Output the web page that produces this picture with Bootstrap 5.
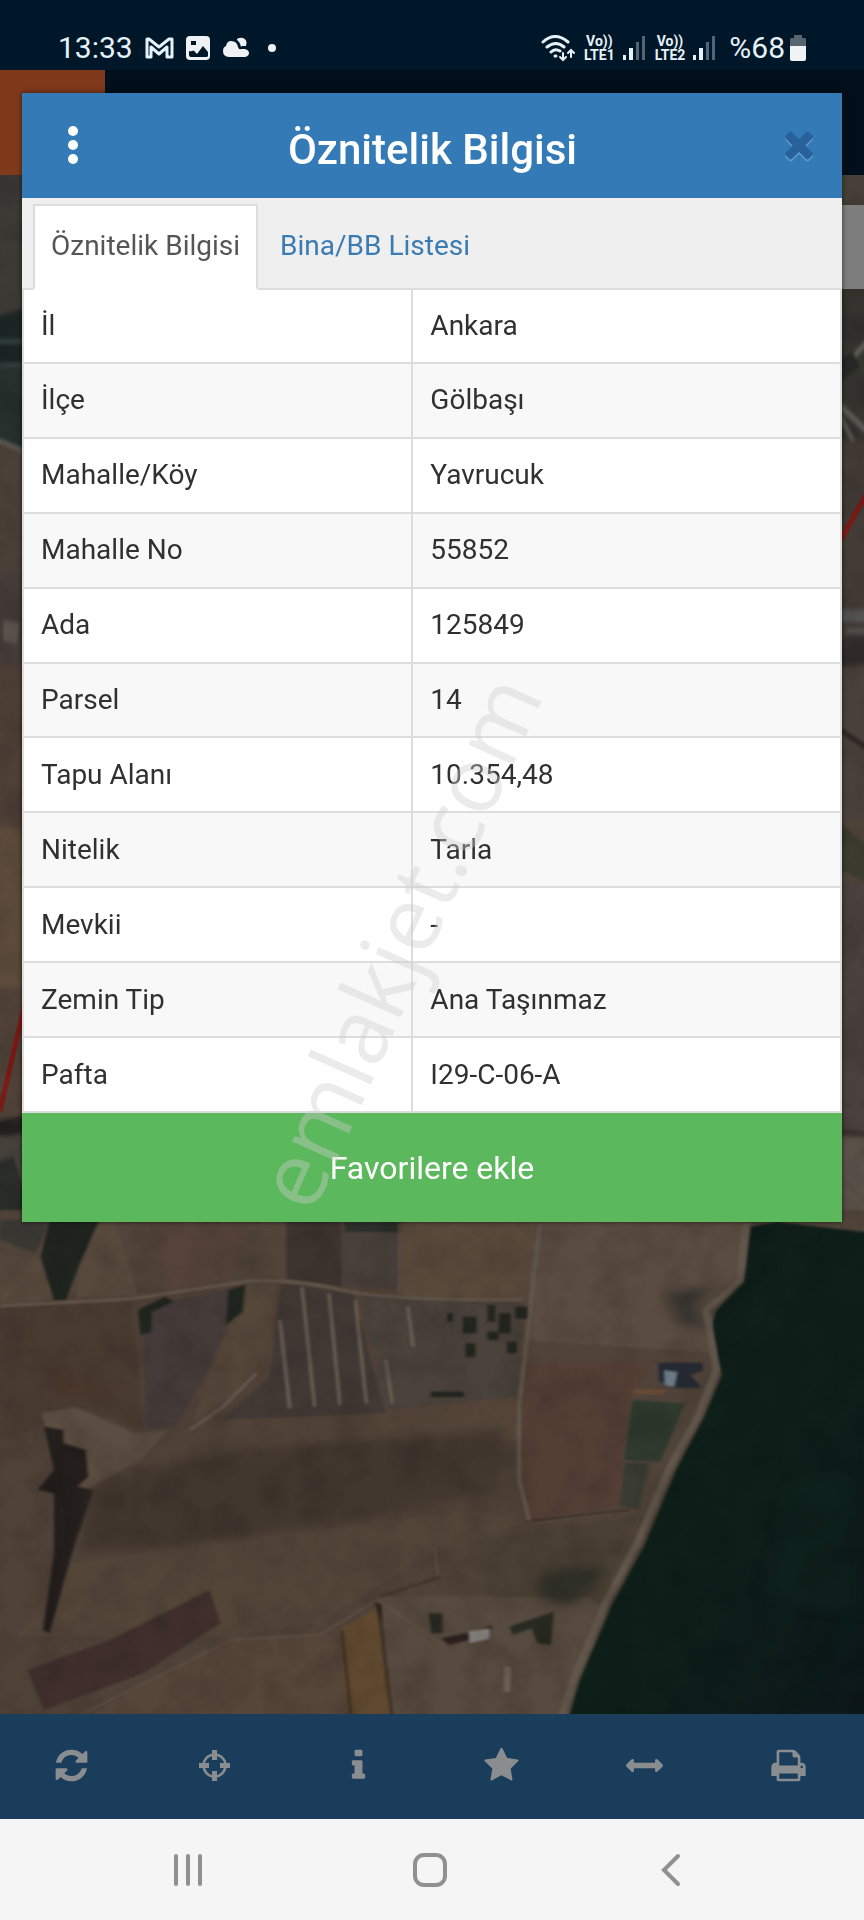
<!DOCTYPE html>
<html lang="tr">
<head>
<meta charset="utf-8">
<meta name="viewport" content="width=device-width, initial-scale=1">
<title>Öznitelik Bilgisi</title>
<link href="https://cdn.jsdelivr.net/npm/bootstrap@5.3.0/dist/css/bootstrap.min.css" rel="stylesheet">
<style>
  body { font-family: Roboto, "Liberation Sans", sans-serif; font-size: 28px; color: #303030; background: #001629; }
  .status-strip { height: 70px; padding: 26px 57px 0 58px; color: #e6f2fa; font-size: 30px; line-height: 40px; }
  .volte { font-size: 14px; line-height: 14px; font-weight: 700; }
  .status-strip svg, .tool svg, .sysnav svg { display: block; }
  .app { display: grid; grid-template-columns: 100%; }
  .app > * { grid-area: 1 / 1; }
  .app-bar { height: 105px; background: #000f1b; }
  .brand-block { width: 105px; background: #80391b; }
  .map-area { min-height: 0; background: #4f4339; }
  .search-strip { top: 30px; right: 0; width: 60px; height: 84px; background: #7d7d7d; }
  .toolbar { height: 105px; background: #1a3d5c; padding: 0 4px 2px 0; }
  .tool { flex: 1 1 0; color: #8a8d90; background: none; border: 0; padding: 0; }
  .info-panel { z-index: 1; align-self: start; margin: 23px 22px 0; box-shadow: 0 0 5px rgba(0,0,0,.6); background: #efefef; }
  .panel-head { height: 105px; background: #337ab7; color: #fff; padding: 0 22px 0 31px; }
  .panel-head h1 { flex: 1; text-align: center; padding: 8px 8px 0 0; font-size: 42px; font-weight: 500; line-height: 48px; }
  .head-btn { width: 42px; background: none; border: 0; padding: 0; color: #fff; line-height: 0; }
  .close-mark { color: #29629a; padding-bottom: 4px; filter: drop-shadow(0 2px 0 #5f9bce); }
  .panel-tabs { height: 92px; padding: 6px 10px 0 11px; border-bottom: 2px solid #ddd; }
  .panel-tabs .nav-link { height: 86px; padding: 0 16px 2px; border-radius: 0; border: 2px solid transparent; color: #3a7bb2; line-height: 36px; margin-bottom: -2px; }
  .panel-tabs .nav-link.active { color: #555; border-color: #ddd #ddd #fff; background: #fff; }
  .attr-table { height: 823px; border: solid #ddd; border-width: 0 2px; --bs-table-color: #303030; --bs-table-bg: #fff; }
  .attr-table .label-col { width: 47.6%; }
  .attr-table th, .attr-table td { padding: 0 17px; font-weight: 400; vertical-align: middle; border: 0 solid #ddd; border-bottom-width: 2px; line-height: 36px; }
  .attr-table th { border-right-width: 2px; }
  .attr-table tr:nth-child(even) > * { background: #f8f8f8; }
  .fav-btn { height: 109px; background: #5cb85c; color: #fff; font-size: 32px; border: 0; border-radius: 0; }
  .fav-btn:hover { background: #5cb85c; color: #fff; }
  .sysnav { height: 101px; background: #f5f5f5; padding: 0 72px 0 67px; }
  .sysnav button { background: none; border: 0; padding: 0; color: #909090; }
  .watermark { left: 46%; top: 49%; transform: translate(-50%, -50%) rotate(-66deg); font-family: "Open Sans", sans-serif; font-size: 91px; font-weight: 500; line-height: 1; color: rgba(205,205,205,.4); z-index: 2; pointer-events: none; white-space: nowrap; }
</style>
</head>
<body>
<div class="d-flex flex-column min-vh-100 position-relative overflow-hidden">

  <header class="status-strip d-flex align-items-center justify-content-between">
    <div class="d-flex align-items-center">
      <span>13:33</span>
      <svg class="ms-2" width="36" height="28" viewBox="0 0 36 28" fill="none" stroke="currentColor" stroke-width="3" stroke-linejoin="round"><path d="M6 5h2l10 8 10-8h3v18h-5V13l-8 7-8-7v10H6z"/></svg>
      <svg class="ms-2" width="26" height="26" viewBox="0 0 26 26"><rect x="1" y="1" width="24" height="24" rx="4" fill="#eef2f4"/><path fill="#001629" d="M4 16c3 1 5-2 6 1l2 2 6-8 5 6v4q0 1-2 1H6q-2 0-2-2zM6 6h5v4H6z"/></svg>
      <svg class="ms-2 me-1" width="34" height="26" viewBox="0 0 34 26" fill="#eef2f4"><path d="M12 6q6 0 7 6 1 3 3 2h4q4 1 4 4t-4 4H11q-7 0-7-6 0-4 3-5 1-5 5-5z"/><path d="M18 4q3-2 6-1 5 2 3 8h-4l-1 1q-1-5-4-7z"/></svg>
      <svg class="ms-2" width="14" height="14" viewBox="0 0 14 14"><circle cx="7" cy="7" r="4" fill="#eef2f4"/></svg>
    </div>
    <div class="d-flex align-items-center">
      <svg width="36" height="30" viewBox="0 0 36 30" fill="none" stroke="currentColor" stroke-width="3" stroke-linecap="round"><path d="M3 9q12-11 25 0M7 14q9-7 17 0M11 19q4-4 9-1"/><path d="M15 23h1" /><path stroke-width="2" d="M23 20v7m-3-3 3 3 3-3M31 24v-7m-3 3 3-3 3 3"/></svg>
      <div class="volte text-center ms-2"><div>Vo))</div><div>LTE1</div></div>
      <svg class="ms-2" width="24" height="26" viewBox="0 0 24 26"><path fill="#e6f2fa" d="M0 20h3v5H0zM6 13h4v12H6z"/><path fill="#536475" d="M13 7h3v18h-3zM19 1h3v24h-3z"/></svg>
      <div class="volte text-center ms-2"><div>Vo))</div><div>LTE2</div></div>
      <svg class="ms-2" width="24" height="26" viewBox="0 0 24 26"><path fill="#e6f2fa" d="M0 20h3v5H0zM6 13h4v12H6z"/><path fill="#536475" d="M13 7h3v18h-3zM19 1h3v24h-3z"/></svg>
      <span class="ms-2 ps-1">%68</span>
      <svg class="ms-1" width="18" height="28" viewBox="0 0 18 28"><path fill="#56656f" d="M5 1h8v3h3q1 0 1 2v8H1V6q0-2 1-2h3z"/><path fill="#f0f3f4" d="M1 12h16v13q0 2-2 2H3q-2 0-2-2z"/></svg>
    </div>
  </header>

  <div class="app flex-grow-1">
    <div class="d-flex flex-column">
      <div class="app-bar d-flex"><div class="brand-block"></div></div>
      <div class="map-area flex-grow-1 position-relative overflow-hidden">
        <svg class="position-absolute top-0 start-0 w-100 h-100" viewBox="0 0 864 1539" preserveAspectRatio="xMidYMax slice" aria-hidden="true">
          <defs>
            <linearGradient id="water" x1="0" x2="1" y1="0" y2="1"><stop offset="0" stop-color="#101d1a"/><stop offset=".55" stop-color="#0e1f19"/><stop offset="1" stop-color="#0d171b"/></linearGradient>
            <linearGradient id="field" x1="0" x2="1"><stop offset="0" stop-color="#4b3e36"/><stop offset="1" stop-color="#564639"/></linearGradient>
            <filter id="soft" color-interpolation-filters="sRGB"><feGaussianBlur stdDeviation="3"/></filter>
            <filter id="haze" x="-30%" y="-30%" width="160%" height="160%" color-interpolation-filters="sRGB"><feGaussianBlur stdDeviation="14"/></filter>
            <filter id="grain" x="0" y="0" width="100%" height="100%"><feTurbulence type="fractalNoise" baseFrequency=".03 .03" numOctaves="4" seed="4"/><feColorMatrix values="0 0 0 0 0  0 0 0 0 0  0 0 0 0 0  1.3 0 0 0 -.5"/></filter>
          </defs>
          <!-- strips beside the panel -->
          <g transform="translate(0 -15) scale(.333 .702)" filter="url(#soft)">
            <path fill="#3d3935" d="M-20 0h120v225H-20z"/><path fill="#1c2524" d="M-20 225l100-15v100h-100z"/><path fill="#3f4c4c" d="M-20 256h100v5h-100zM-20 290h100v4h-100z"/><path fill="#26302c" d="M-20 295h100v120l-100-20z"/>
            <path fill="#4c4139" d="M-20 400l100 20v180h-100z"/><path stroke="#6a625a" stroke-width="6" d="M-10 398l90 18"/><path fill="#453b38" d="M-20 590h100v130h-100z"/><path fill="#5c5550" d="M10 655l50 5-10 30-40-5z"/>
            <path fill="#4e4037" d="M-20 720h100v230h-100z"/><path fill="#5c4b3a" d="M-20 950h100v230h-100z"/><path fill="#504239" d="M-20 1180h100v180h-100z"/>
            <path fill="#242322" d="M-20 1370l100-10v25l-100 10z"/><path fill="#47423c" d="M-20 1390h100v200h-100z"/><path fill="#2a2d29" d="M-20 1430l60-10 40 60v100H-20z"/>
          </g>
          <g transform="translate(780 -15) scale(.333 .702)" filter="url(#soft)">
            <path fill="#464038" d="M170 0h120v70H170z"/><path fill="#35342f" d="M170 180h120v220H170z"/><path stroke="#5e5c56" stroke-width="10" fill="none" d="M180 300l80-40M180 350l90 40M180 365l90 80"/><path fill="#252724" d="M180 285l40-10 20 20-60 20z"/>
            <path fill="#433b36" d="M170 400h120v300H170z"/><path fill="#5a5856" d="M180 640h90v18h-90zM200 668h60v5h-60z"/><path fill="#332e2c" d="M170 680h120v40H170z"/><path fill="#4a403b" d="M170 720h120v220H170z"/><path stroke="#1f1b1a" stroke-width="6" d="M180 812l90 28"/>
            <path fill="#3b3b2f" d="M170 940l100 40v50l-100-20z"/><path fill="#4a403d" d="M170 1020l120 20v350H170z"/><path stroke="#292422" stroke-width="4" d="M180 1384l90 5"/><path fill="#5a5149" d="M170 1392h120v130l-60-5-60-10z"/>
          </g>
          <path d="M0 936l26-112M838 370l30-54" stroke="#7c1b17" stroke-width="5"/>
          <!-- farmland and reservoir below the panel -->
          <g transform="translate(0 1025) scale(.551 .3333)">
            <g filter="url(#soft)">
              <path fill="#51443a" d="M-20 30h1620v920H-20z"/><path fill="url(#field)" d="M-20 300l470-60 510 60v670L-20 1120z"/>
              <path fill="#4f4238" d="M-20 720h1140v860H-20z"/>
              <path fill="#59493b" d="M725 40h240v258l-235-10z"/><path fill="#5a4c40" d="M965 40h400v160l-80 110 20 150-350-40z"/>
              <path fill="#55433a" d="M280 60h170l-30 180-120 30z"/><path fill="#3d332f" d="M520 60h100v200l-100-22z"/><path fill="#4a403b" d="M620 90h105v180l-105-18z"/><path fill="#2c302a" d="M625 66h102v30H625z"/>
              <path fill="#57493c" d="M0 160l70 20 30 120-100 15zM150 70h60l40 215-110 10z"/>
              <path fill="#1f241f" d="M90 60h90l-40 150-20 90-22 0-24-130z"/><path fill="#3b3934" d="M0 60h90l-25 100-65-40z"/>
              <path fill="#4a3b32" d="M0 320l240-20 20 390-100-60-160 90z"/>
              <path fill="#453b39" d="M260 320l180-60-60 240-60 180-55 5z"/>
              <path fill="#55473a" d="M450 250h50l-10 190-70 150-70 80 30-150z"/>
              <path fill="#423935" d="M510 250l130 30 60 360-300 20 90-130z"/><path fill="#4a423b" d="M650 280l300 30-10 280-240 40z"/>
              <path fill="#50433a" d="M940 425l350 50-40 120-110 10-20 320-150 50-25-100z"/><path fill="#543f35" d="M952 490l235-5-45 120-20 310-160 50-15-220z"/>
              <path fill="#544539" d="M130 1090l280-70 460-90 80 40-180 100-190 200-170 40-380 0z"/>
              <path fill="#5b4d41" d="M75 640l60-20 110 80 60-10-50 90-100 90-50-60z"/>
              <path fill="#402f2d" d="M50 1410l150-90 180-150 20 100-140 150-180 110z"/><path fill="#564539" d="M410 1310l190-10 110 260-560 0z"/><path fill="#604930" d="M615 1290l72-70 24 340h-78z"/>
              <path fill="#4b4035" d="M870 1020l280-70-50 220-200 130z"/><path fill="#574a3f" d="M690 1190l380 0 40 60-60 310H710z"/>
              <path fill="#241f1d" d="M80 680l35 10 0 40 40 20 5 80-20 30 30 10-30 140-20 110-30 180-12-10 20-230 0-180-30-10 30-60z"/>
              <path fill="url(#water)" d="M1362 80l50-14 156 30h30v1500H1025L1052 1440 1110 1216 1168 1040 1228 806 1278 650 1310 526 1290 386 1300 330 1350 246z"/>
            </g>
            <g filter="url(#haze)">
              <path fill="#3b3029" d="M160 860q120-80 350-120l410-60-20 200-480 140-270 40z" opacity=".6"/>
              <path fill="#32302c" d="M1215 280l80-25-35 60 20 80-50-30z"/><path fill="#2e2f26" d="M980 1130l60-30 60 10-60 110-60-30z"/><path fill="#0f2a1e" d="M1440 850l110-50v450l-160-60z" opacity=".25"/>
              <path fill="#4a3325" d="M100 500l120 80-130 20z" opacity=".5"/>
            </g>
            <g filter="url(#soft)" fill="none" stroke-linejoin="round">
              <path stroke="#62574c" stroke-width="13" d="M1354 70L1342 240 1282 330 1300 510 1266 650 1216 800 1156 1030 1098 1210 1040 1440 1018 1560"/>
              <path stroke="#64584c" stroke-width="9" d="M0 318l240-22 210-52q90-10 180 30 110 30 320 24"/>
              <path stroke="#655a4e" stroke-width="7" d="M980 70l-16 230-22 320 0 220 20 130M345 690l60-70 60-100"/>
              <path stroke="#6a6156" stroke-width="6" d="M508 360l18 265M548 260l23 360M597 280l20 335M645 300l20 310M740 320l10 120M700 480l12 130"/>
              <path stroke="#605247" stroke-width="4" d="M685 1190l110-60-6-90M685 1200l120 135M140 1550l280-230 160-15 110-110M970 970l180-40M725 70v210"/>
              <path stroke="#33291f" stroke-width="4" d="M688 1190l110-60M620 1290l18 270M688 1230l24 330M955 965l190-35"/>
              <path stroke="#756557" stroke-width="12" d="M921 1400v76"/>
            </g>
            <g filter="url(#soft)">
              <path fill="#303a2e" d="M1148 600l95 10-20 80-25 95-65-5z"/><path fill="#3a3c32" d="M1134 790l45-2-20 140-35-10z"/>
              <path fill="#20251f" d="M250 330l50-40 15 15-40 30v60l-20 10zM415 270l30-15-5 80-30 40z"/>
              <path fill="#23251f" d="M840 350h25v50h-25zM845 430h18v40h-18zM885 315h14v50h-14zM905 340h22v60h-22zM885 395h20v25h-20zM920 425h18v35h-18zM935 320h22v36h-22zM812 340h9v25h-9zM782 575h60v16h-60z"/>
              <path fill="#252a34" d="M1195 488h80v24l-22 12 20 40-50 0-26-20z"/><path fill="#6e7c89" d="M1205 510l25 6-6 45-18-6z"/><path fill="#694b36" d="M1150 568h58v15h-58z"/>
              <path fill="#2c201e" d="M800 1315l60-20 35-20-10 30-70 30zM680 1205l12 60 0-50z"/><path fill="#898581" d="M850 1295l38-10v32l-36 12z"/><path fill="#292b22" d="M925 1280l80-45-5 100-25-5-10-45-35 20zM778 1240h25v60h-20z"/>
            </g>
          </g>
          <rect width="864" height="1539" filter="url(#grain)" opacity=".2"/>
        </svg>
        <div class="search-strip position-absolute"></div>
      </div>
      <nav class="toolbar d-flex align-items-center" aria-label="Harita araçları">
        <button class="tool d-flex justify-content-center" aria-label="Yenile"><svg width="37" height="37" viewBox="0 0 1792 1792" fill="currentColor"><path d="M1639 1056q0 5-1 7-64 268-268 434.500t-478 166.500q-146 0-282.500-55t-243.500-157l-129 129q-19 19-45 19t-45-19-19-45v-448q0-26 19-45t45-19h448q26 0 45 19t19 45-19 45l-137 137q71 66 161 102t187 36q134 0 250-65t186-179q11-17 53-117 8-23 30-23h192q13 0 22.500 9.500t9.500 22.500zm25-800v448q0 26-19 45t-45 19h-448q-26 0-45-19t-19-45 19-45l138-138q-148-137-349-137-134 0-250 65t-186 179q-11 17-53 117-8 23-30 23h-199q-13 0-22.500-9.500t-9.500-22.500v-7q65-268 270-434.500t480-166.500q146 0 284 55.500t245 156.500l130-129q19-19 45-19t45 19 19 45z"/></svg></button>
        <button class="tool d-flex justify-content-center" aria-label="Konumum"><svg width="37" height="37" viewBox="0 0 37 37" fill="currentColor"><circle cx="18.500" cy="18.500" r="11" fill="none" stroke="currentColor" stroke-width="2.500"/><path d="M16 3h5v10h-5zM16 24h5v10h-5zM3 16h10v5H3zM24 16h10v5H24z"/></svg></button>
        <button class="tool d-flex justify-content-center" aria-label="Bilgi"><svg width="37" height="37" viewBox="0 0 1792 1792" fill="currentColor"><path d="M1216 1344v128q0 26-19 45t-45 19h-512q-26 0-45-19t-19-45v-128q0-26 19-45t45-19h64v-384h-64q-26 0-45-19t-19-45v-128q0-26 19-45t45-19h384q26 0 45 19t19 45v576h64q26 0 45 19t19 45zm-128-1152v192q0 26-19 45t-45 19h-256q-26 0-45-19t-19-45v-192q0-26 19-45t45-19h256q26 0 45 19t19 45z"/></svg></button>
        <button class="tool d-flex justify-content-center" aria-label="Favoriler"><svg width="37" height="37" viewBox="0 0 1792 1792" fill="currentColor"><path d="M1728 647q0 22-26 48l-363 354 86 500q1 7 1 20 0 21-10.500 35.500t-30.500 14.500q-19 0-40-12l-449-236-449 236q-22 12-40 12-21 0-31.500-14.500t-10.500-35.500q0-6 2-20l86-500-364-354q-25-27-25-48 0-37 56-46l502-73 225-455q19-41 49-41t49 41l225 455 502 73q56 9 56 46z"/></svg></button>
        <button class="tool d-flex justify-content-center" aria-label="Ölçüm"><svg width="37" height="37" viewBox="0 0 1792 1792" fill="currentColor"><path d="M1792 896q0 26-19 45l-256 256q-19 19-45 19t-45-19-19-45v-128h-1024v128q0 26-19 45t-45 19-45-19l-256-256q-19-19-19-45t19-45l256-256q19-19 45-19t45 19 19 45v128h1024v-128q0-26 19-45t45-19 45 19l256 256q19 19 19 45z"/></svg></button>
        <button class="tool d-flex justify-content-center" aria-label="Yazdır"><svg width="37" height="37" viewBox="0 0 1792 1792" fill="currentColor"><path d="M448 1536h896v-256h-896v256zm0-640h896v-384h-160q-40 0-68-28t-28-68v-160h-640v640zm1152 64q0-26-19-45t-45-19-45 19-19 45 19 45 45 19 45-19 19-45zm128 0v416q0 13-9.500 22.500t-22.500 9.500h-224v160q0 40-28 68t-68 28h-960q-40 0-68-28t-28-68v-160h-224q-13 0-22.500-9.500t-9.500-22.500v-416q0-79 56.500-135.500t135.500-56.500h64v-544q0-40 28-68t68-28h672q40 0 88 20t76 48l152 152q28 28 48 76t20 88v256h64q79 0 135.500 56.500t56.500 135.500z"/></svg></button>
      </nav>
    </div>

    <section class="info-panel" role="dialog" aria-labelledby="panelTitle">
      <div class="panel-head d-flex align-items-center">
        <button class="head-btn" aria-label="Menü"><svg width="42" height="42" viewBox="0 0 42 42" fill="currentColor"><circle cx="20" cy="6" r="5"/><circle cx="20" cy="20" r="5"/><circle cx="20" cy="34" r="5"/></svg></button>
        <h1 class="mb-0" id="panelTitle">Öznitelik Bilgisi</h1>
        <button class="head-btn close-mark" aria-label="Kapat"><svg width="42" height="42" viewBox="0 0 1792 1792" fill="currentColor"><path d="M1490 1322q0 40-28 68l-136 136q-28 28-68 28t-68-28l-294-294-294 294q-28 28-68 28t-68-28l-136-136q-28-28-28-68t28-68l294-294-294-294q-28-28-28-68t28-68l136-136q28-28 68-28t68 28l294 294 294-294q28-28 68-28t68 28l136 136q28 28 28 68t-28 68l-294 294 294 294q28 28 28 68z"/></svg></button>
      </div>
      <nav class="panel-tabs nav nav-tabs">
        <a class="nav-link active d-flex align-items-center" href="#oznitelik" aria-current="page">Öznitelik Bilgisi</a>
        <a class="nav-link d-flex align-items-center ms-1" href="#bina">Bina/BB Listesi</a>
      </nav>
      <table class="table attr-table mb-0" id="oznitelik">
        <colgroup><col class="label-col"><col></colgroup>
        <tbody>
          <tr><th scope="row">İl</th><td>Ankara</td></tr>
          <tr><th scope="row">İlçe</th><td>Gölbaşı</td></tr>
          <tr><th scope="row">Mahalle/Köy</th><td>Yavrucuk</td></tr>
          <tr><th scope="row">Mahalle No</th><td>55852</td></tr>
          <tr><th scope="row">Ada</th><td>125849</td></tr>
          <tr><th scope="row">Parsel</th><td>14</td></tr>
          <tr><th scope="row">Tapu Alanı</th><td>10.354,48</td></tr>
          <tr><th scope="row">Nitelik</th><td>Tarla</td></tr>
          <tr><th scope="row">Mevkii</th><td>-</td></tr>
          <tr><th scope="row">Zemin Tip</th><td>Ana Taşınmaz</td></tr>
          <tr><th scope="row">Pafta</th><td>I29-C-06-A</td></tr>
        </tbody>
      </table>
      <button class="fav-btn btn w-100 d-block">Favorilere ekle</button>
    </section>
  </div>

  <nav class="sysnav d-flex align-items-center" aria-label="Sistem">
    <button class="flex-fill d-flex justify-content-center" aria-label="Son uygulamalar"><svg width="34" height="34" viewBox="0 0 34 34" stroke="currentColor" stroke-width="4" stroke-linecap="round"><path d="M5 3v28M17 3v28M29 3v28"/></svg></button>
    <button class="flex-fill d-flex justify-content-center" aria-label="Ana ekran"><svg width="34" height="34" viewBox="0 0 34 34" fill="none" stroke="currentColor" stroke-width="4"><rect x="2" y="2" width="30" height="30" rx="9"/></svg></button>
    <button class="flex-fill d-flex justify-content-center" aria-label="Geri"><svg width="34" height="34" viewBox="0 0 34 34" fill="none" stroke="currentColor" stroke-width="4" stroke-linecap="round"><path d="M24 3 10 17l14 14"/></svg></button>
  </nav>

  <div class="watermark position-absolute" aria-hidden="true">emlakjet.com</div>
</div>
<script src="https://cdn.jsdelivr.net/npm/bootstrap@5.3.0/dist/js/bootstrap.bundle.min.js"></script>
</body>
</html>
